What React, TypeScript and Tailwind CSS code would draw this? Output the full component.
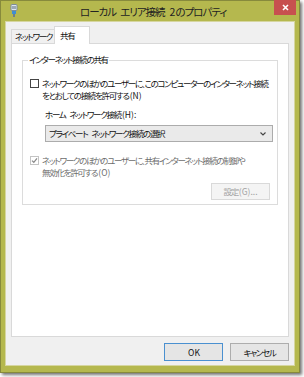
import React from "react";

const jp = "font-['Meiryo_UI','Noto_Sans_CJK_JP',sans-serif] [font-feature-settings:'palt'] whitespace-nowrap";

function NetIcon() {
  return (
    <svg width="8" height="13" viewBox="0 0 8 13">
      <rect x="1" y="0.5" width="6" height="6" rx="1" fill="#dfe7ee" stroke="#7d8c99" />
      <rect x="2.5" y="2" width="1" height="3" fill="#5a6d7c" />
      <rect x="4.5" y="2" width="1" height="3" fill="#5a6d7c" />
      <rect x="2" y="7" width="4" height="3" fill="#3f8fd2" />
      <rect x="3" y="10" width="2" height="3" fill="#6e7f8d" />
    </svg>
  );
}

function Check({ checked, disabled }: { checked?: boolean; disabled?: boolean }) {
  return (
    <div
      className={`mt-[2px] flex h-[9px] w-[9px] shrink-0 items-center justify-center border bg-white ${
        disabled ? "border-[#c4c4c4] bg-[#f4f4f4]" : "border-[#444]"
      }`}
    >
      {checked ? (
        <svg width="7" height="7" viewBox="0 0 7 7">
          <path d="M1 3.6 L2.8 5.3 L6 1.4" fill="none" stroke={disabled ? "#8a8a8a" : "#222"} strokeWidth="1.3" />
        </svg>
      ) : null}
    </div>
  );
}

function L({ children }: { children: React.ReactNode }) {
  return <span className="pl-[1px] tracking-[0px]">{children}</span>;
}

// wider gap for the spaces between words
function Sp() {
  return <span className="inline-block w-[4px]" />;
}

export default function App() {
  return (
    <div className={`h-[377px] w-[304px] bg-white ${jp}`}>
      <div className="relative flex h-[373px] w-[300px] flex-col border border-[#878a3c] bg-[#b5b84e] shadow-[2px_2px_3px_rgba(0,0,0,0.55)]">
        {/* title bar */}
        <div className="relative flex h-[20px] items-center pl-[79px]">
          <div className="absolute left-[9px] top-[3px]">
            <NetIcon />
          </div>
          <span className="pt-[2px] text-[10.5px] tracking-[-1px] text-[#222]">
            ローカル<Sp />エリア接続<Sp /><L>2</L>のプロパティ
          </span>
          <div className="absolute right-[3px] top-[-1px] flex h-[15px] w-[22px] items-center justify-center bg-[#c7504f]">
            <svg width="7" height="7" viewBox="0 0 7 7">
              <path d="M1 1 L6 6 M6 1 L1 6" stroke="#fff" strokeWidth="1.6" />
            </svg>
          </div>
        </div>

        {/* client */}
        <div className="mx-[4px] mb-[6px] flex flex-1 flex-col border border-[#d6d6a0] bg-[#f0f0f0] px-[5px] pt-[4px] text-[8.5px] tracking-[-1.3px]">
          <div className="flex items-end">
            <div className="-mr-px flex h-[14px] w-[44px] items-center border border-b-0 border-[#d9d9d9] bg-[#f0f0f0] pl-[3px] text-[#111]">
              ネットワーク
            </div>
            <div className="relative z-10 -mb-px flex h-[18px] w-[36px] items-start border border-b-0 border-[#d9d9d9] bg-white pl-[5px] pt-[2px] text-[#111]">
              共有
            </div>
          </div>
          <div className="flex h-[294px] flex-col border border-[#d9d9d9] bg-white px-[10px] pt-[16px]">
            <div className="relative h-[145px] border border-[#dcdcdc] pl-[7px] pr-[4px] pt-[16px]">
              <span className="absolute left-[5px] top-[-8px] bg-white px-[1px] text-[#111]">
                インターネット接続の共有
              </span>
              <div className="flex gap-[3px]">
                <Check />
                <div className="leading-[12px] text-[#111]">
                  ネットワークのほかのユーザーに、このコンピューターのインターネット接続
                  <br />
                  をとおしての接続を許可する<L>(N)</L>
                </div>
              </div>
              <div className="ml-[15px] mt-[7px] leading-[12px] text-[#111]">
                ホーム<Sp />ネットワーク接続<L>(H):</L>
              </div>
              <div className="ml-[15px] mt-[5px] flex h-[17px] items-center justify-between border border-[#acacac] bg-[#eaeaea] pl-[3px] pr-[6px] text-[#111]">
                <span>
                  プライベート<Sp />ネットワーク接続の選択
                </span>
                <svg width="6" height="4" viewBox="0 0 6 4">
                  <path d="M0.5 0.5 L3 3 L5.5 0.5" fill="none" stroke="#444" strokeWidth="1.1" />
                </svg>
              </div>
              <div className="mt-[12px] flex gap-[3px]">
                <Check checked disabled />
                <div className="leading-[12px] text-[#6d6d6d]">
                  ネットワークのほかのユーザーに、共有インターネット接続の制御や
                  <br />
                  無効化を許可する<L>(O)</L>
                </div>
              </div>
              <div className="mt-[5px] flex justify-end pr-[3px]">
                <div className="flex h-[17px] w-[59px] items-center justify-center border border-[#d9d9d9] bg-[#f4f4f4] text-[#a3a3a3]">
                  設定<L>(G)...</L>
                </div>
              </div>
            </div>
          </div>
          <div className="mt-[6px] flex justify-end gap-[7px]">
            <div className="flex h-[18px] w-[59px] items-center justify-center border border-[#4a90d0] bg-[#e5e5e5] text-[#111]">
              <L>OK</L>
            </div>
            <div className="flex h-[18px] w-[59px] items-center justify-center border border-[#adadad] bg-[#e5e5e5] text-[#111]">
              キャンセル
            </div>
          </div>
        </div>
      </div>
    </div>
  );
}
